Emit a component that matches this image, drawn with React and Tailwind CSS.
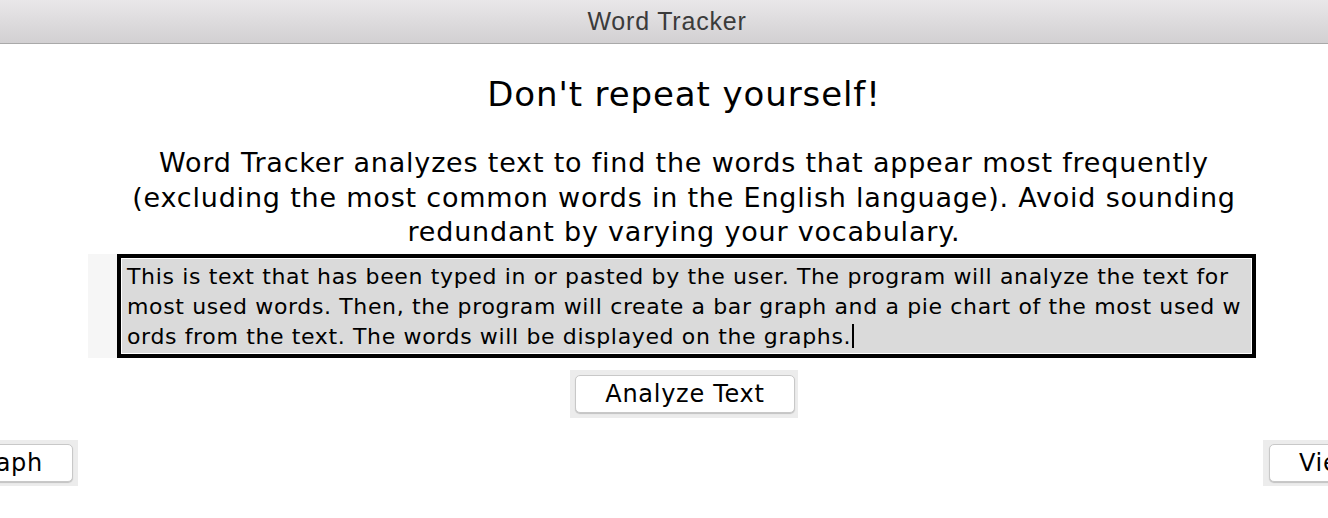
import React from "react";

const userText =
  "This is text that has been typed in or pasted by the user. The program will analyze the text for most used words. Then, the program will create a bar graph and a pie chart of the most used words from the text. The words will be displayed on the graphs.";

function MacButton({ children }) {
  return (
    <button className="shrink-0 h-[38px] px-[29px] bg-white rounded-[5px] border border-[#c8c8c8] shadow-[0_1px_1px_rgba(0,0,0,0.18)] text-[24px] tracking-[0.03em] text-black leading-none whitespace-nowrap">
      {children}
    </button>
  );
}

export default function App() {
  return (
    <div
      className="w-[1328px] h-[518px] bg-white overflow-hidden"
      style={{ fontFamily: '"DejaVu Sans", Verdana, sans-serif' }}
    >
      <div
        className="h-[44px] flex items-center justify-center pl-[6px] bg-gradient-to-b from-[#e9e7e9] to-[#d2d0d2] border-b border-[#a9a9a9] text-[25px] tracking-[0.8px] text-[#3b3b3b]"
        style={{ fontFamily: '"Liberation Sans", Arial, sans-serif' }}
      >
        Word Tracker
      </div>

      <div className="pl-[40px]">
        <h1 className="mt-[30px] text-center text-[34px] leading-[40px] tracking-[0.9px] text-black">
          Don't repeat yourself!
        </h1>

        <p className="mx-auto mt-[32px] w-[1110px] text-center text-[27px] leading-[34.5px] tracking-[0.8px] text-black">
          Word Tracker analyzes text to find the words that appear most
          frequently (excluding the most common words in the English language).
          Avoid sounding redundant by varying your vocabulary.
        </p>
      </div>

      <div className="mt-[4px] ml-[88px] flex">
        <div className="w-[29px] bg-[#f6f6f6]" />
        <div className="w-[1139px] border-4 border-black">
          <div className="h-[96px] border border-white bg-[#dadada] pl-[5px] pr-[6px] pt-[3px] text-[22px] leading-[30px] tracking-[0.64px] text-black break-all">
            {userText}
            <span className="inline-block w-[2px] h-[24px] bg-black align-[-4px] ml-[1px]" />
          </div>
        </div>
      </div>

      <div className="mt-[12px] pl-[40px] flex justify-center">
        <div className="w-[228px] h-[48px] bg-[#ececec] flex items-center justify-center pl-[2px]">
          <MacButton>Analyze Text</MacButton>
        </div>
      </div>

      <div className="mt-[22px] flex justify-between">
        <div className="w-[78px] overflow-hidden flex justify-end">
          <div className="shrink-0 h-[46px] bg-[#ececec] flex items-center pl-[6px] pr-[5px]">
            <MacButton>View Bar Graph</MacButton>
          </div>
        </div>
        <div className="w-[65px] overflow-hidden flex justify-start">
          <div className="shrink-0 h-[46px] bg-[#ececec] flex items-center pl-[6px] pr-[5px]">
            <MacButton>View Pie Chart</MacButton>
          </div>
        </div>
      </div>
    </div>
  );
}
